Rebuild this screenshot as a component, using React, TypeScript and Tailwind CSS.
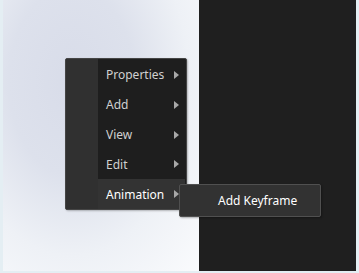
const Item = ({ label, active }: { label: string; active?: boolean }) => (
  <div className={`relative h-[30px] flex items-center pl-[8px] pt-[1px] ${active ? 'bg-[#333333] text-white' : 'text-[#d0d0d0]'}`}>
    <span>{label}</span>
    <span className="absolute right-[6px] top-[11px]">
      <svg width="5" height="8" viewBox="0 0 5 8">
        <path d="M0 0 L5 4 L0 8 Z" fill="#a8a8a8" />
      </svg>
    </span>
  </div>
);

const App = () => {
  const items = ['Properties', 'Add', 'View', 'Edit'];

  return (
    <div
      className="relative w-[359px] h-[273px] flex border-l-[3px] border-r-[3px] border-b-[2px] border-[#e4eef3] text-[12px]"
      style={{ fontFamily: '"Noto Sans", "Open Sans", sans-serif' }}
    >
      <div className="w-[196px] h-full bg-[radial-gradient(ellipse_at_35%_30%,#d8dce9_0%,#dde1ec_35%,#eef1f6_65%,#fafbfd_100%)]" />
      <div className="flex-1 h-full bg-[#1f1f1f]" />

      {/* context menu */}
      <div className="absolute left-[62px] top-[58px] w-[122px] h-[152px] flex rounded-[2px] border border-[#454545] bg-[#1e1e1e] shadow-[1px_1px_2px_rgba(0,0,0,0.25)]">
        <div className="w-[32px] h-full bg-[#303030]" />
        <div className="flex-1 flex flex-col pt-[1px] pr-[1px]">
          {items.map((label) => (
            <Item key={label} label={label} />
          ))}
          <Item label="Animation" active />
        </div>
      </div>

      {/* sub menu */}
      <div className="absolute left-[176px] top-[184px] w-[142px] h-[33px] flex items-center pl-[38px] pt-[1px] rounded-[2px] border border-[#505050] bg-[#323232] text-white shadow-[1px_1px_2px_rgba(0,0,0,0.3)]">
        Add Keyframe
      </div>
    </div>
  );
};

export default App;
